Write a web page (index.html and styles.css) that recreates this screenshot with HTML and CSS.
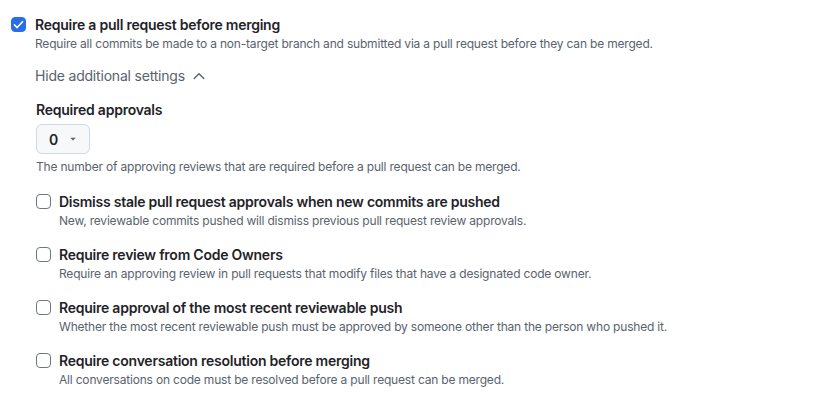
FILE: index.html
```html
<!DOCTYPE html>
<html>
<head>
<meta charset="utf-8">
<link rel="stylesheet" href="styles.css">
</head>
<body>
<div class="rule">
  <span class="cb checked"><svg viewBox="0 0 16 16" width="13" height="13"><path d="M3 8.5l3.3 3.3 6.7-7.3" fill="none" stroke="#fff" stroke-width="1.9" stroke-linecap="round" stroke-linejoin="round"/></svg></span>
  <div class="body">
    <div class="title">Require a pull request before merging</div>
    <div class="desc">Require all commits be made to a non-target branch and submitted via a pull request before they can be merged.</div>
    <div class="toggle">Hide additional settings <svg viewBox="0 0 16 16" width="14" height="14"><path d="M2.5 10.8l5.5-5.5 5.5 5.5" fill="none" stroke="#59636e" stroke-width="1.6" stroke-linecap="round" stroke-linejoin="round"/></svg></div>
    <div class="settings">
      <div class="label">Required approvals</div>
      <div class="select">0 <svg viewBox="0 0 16 16" width="12" height="12"><path d="M4.3 6.3h7.4l-3.7 3.7z" fill="#59636e"/></svg></div>
      <div class="help">The number of approving reviews that are required before a pull request can be merged.</div>
      <div class="sub">
        <span class="cb"></span>
        <div>
          <div class="title">Dismiss stale pull request approvals when new commits are pushed</div>
          <div class="desc">New, reviewable commits pushed will dismiss previous pull request review approvals.</div>
        </div>
      </div>
      <div class="sub">
        <span class="cb"></span>
        <div>
          <div class="title">Require review from Code Owners</div>
          <div class="desc">Require an approving review in pull requests that modify files that have a designated code owner.</div>
        </div>
      </div>
      <div class="sub">
        <span class="cb"></span>
        <div>
          <div class="title">Require approval of the most recent reviewable push</div>
          <div class="desc">Whether the most recent reviewable push must be approved by someone other than the person who pushed it.</div>
        </div>
      </div>
      <div class="sub">
        <span class="cb"></span>
        <div>
          <div class="title">Require conversation resolution before merging</div>
          <div class="desc">All conversations on code must be resolved before a pull request can be merged.</div>
        </div>
      </div>
    </div>
  </div>
</div>
</body>
</html>
```
FILE: styles.css
```css
html, body {
  margin: 0;
  padding: 0;
  background: #ffffff;
}
body {
  font-family: Inter, "Noto Sans", "Liberation Sans", sans-serif;
  color: #1f2328;
}
.rule {
  display: flex;
  align-items: flex-start;
  padding: 15px 0 0 11px;
}
.cb {
  box-sizing: border-box;
  width: 15px;
  height: 15px;
  border: 1px solid #6e7781;
  border-radius: 4px;
  background: #fff;
  flex: none;
  display: flex;
  align-items: center;
  justify-content: center;
}
.cb.checked {
  background: #2a6ee6;
  border-color: #2a6ee6;
  margin-top: 2px;
  margin-right: 9px;
}
.title {
  font-size: 14px;
  font-weight: 600;
  line-height: 20px;
  letter-spacing: -0.24px;
  color: #1f2328;
}
.desc, .help {
  font-size: 12px;
  line-height: 18px;
  letter-spacing: -0.19px;
  color: #59636e;
}
.toggle {
  margin-top: 13px;
  font-size: 14px;
  line-height: 20px;
  letter-spacing: -0.2px;
  color: #59636e;
  display: flex;
  align-items: center;
  gap: 7px;
}
.settings {
  padding-left: 1px;
}
.label {
  margin-top: 14px;
  font-size: 14px;
  font-weight: 600;
  line-height: 20px;
  letter-spacing: -0.24px;
}
.select {
  box-sizing: border-box;
  margin-top: 4px;
  width: 54px;
  height: 30px;
  border: 1px solid #d1d9e0;
  border-radius: 6px;
  background: #f6f8fa;
  display: flex;
  align-items: center;
  gap: 9px;
  padding-left: 12px;
  font-size: 14px;
  font-weight: 600;
}
.help {
  margin-top: 4px;
}
.sub {
  display: flex;
  align-items: flex-start;
  gap: 8px;
  margin-top: 16px;
}
.sub + .sub {
  margin-top: 15px;
}
.sub .cb {
  margin-top: 2px;
}
```
